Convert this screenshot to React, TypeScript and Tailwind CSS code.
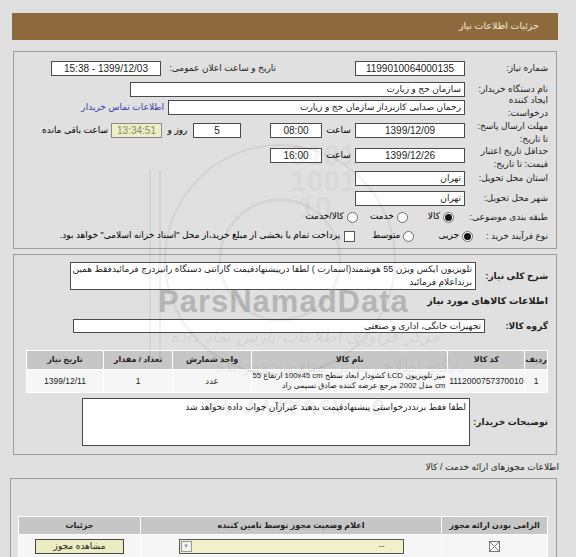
import * as React from "react"

// صفحه جزئیات اطلاعات نیاز

const FONT = "font-['Liberation_Sans','DejaVu_Sans',sans-serif]"

function Box({ w, h = 15, className = "", children }: { w: number; h?: number; className?: string; children?: React.ReactNode }) {
    return (
        <div
            className={"shrink-0 border border-[#4a4a4a] bg-white text-[9px] leading-[13px] text-[#222] px-[3px] overflow-hidden whitespace-nowrap " + className}
            style={{ width: w, height: h }}
        >
            {children}
        </div>
    )
}

function Radio({ on = false }: { on?: boolean }) {
    return (
        <span className="shrink-0 w-[11px] h-[11px] rounded-full border border-[#6b6b6b] bg-white flex items-center justify-center">
            {on && <span className="w-[7px] h-[7px] rounded-full bg-[#111]" />}
        </span>
    )
}

function Label({ w, children, bold = false }: { w: number; children: React.ReactNode; bold?: boolean }) {
    return (
        <div
            className={"shrink-0 whitespace-nowrap leading-[13px] text-[#222] " + (bold ? "font-bold text-[9px]" : "text-[9px]")}
            style={{ width: w }}
        >
            {children}
        </div>
    )
}

function Watermark() {
    return (
        <div className="absolute inset-0 pointer-events-none">
            <svg className="absolute left-[130px] top-[130px]" width="300" height="260" viewBox="0 0 300 260" fill="none">
                <circle cx="150" cy="130" r="115" stroke="#000" strokeOpacity="0.06" strokeWidth="2" />
                <circle cx="150" cy="130" r="60" stroke="#000" strokeOpacity="0.05" strokeWidth="3" />
                <path d="M20 40 L20 230 M30 40 L30 230" stroke="#000" strokeOpacity="0.05" strokeWidth="2" />
            </svg>
            <div className="absolute left-[290px] top-[142px] text-[30px] leading-[26px] font-bold text-black/[0.05] font-['Liberation_Sans',sans-serif]">
                0101<br />1001<br />&nbsp;10
            </div>
            <div className="absolute left-[158px] top-[287px] text-[31px] leading-[30px] font-bold tracking-[1px] text-[#8a8a8a]/50 font-['Liberation_Sans',sans-serif]">
                ParsNamadData
            </div>
            <div dir="rtl" className="absolute left-[170px] top-[326px] text-[17px] leading-[20px] italic text-black/[0.07] font-['DejaVu_Sans',sans-serif]">
                مرکز فراوری اطلاعات پارس نماد داده
            </div>
            <div dir="rtl" className="absolute left-[215px] top-[356px] text-[17px] leading-[20px] text-black/[0.06] font-['DejaVu_Sans',sans-serif]">
                پایگاه اطلاع رسانی مناقصه ومزایده
            </div>
            <div className="absolute left-[190px] top-[395px] text-[24px] leading-[24px] font-bold text-black/[0.07] font-['DejaVu_Sans',sans-serif]">
                ۰۲۱-۸۸۳۴۹۶۷۰-۵
            </div>
        </div>
    )
}

const ITEM_COLS = [22, 77, 198, 79, 69, 77]
const NUM = "text-center !text-[10px]"

export default function App() {
    return (
        <div className={"relative w-[576px] h-[557px] overflow-hidden bg-[#e0e0e0] " + FONT}>
            <div dir="rtl" className="ml-[12px] w-[546px] pt-[13px]">
                {/* Header */}
                <div className="h-[27px] bg-[#8c6a3e] flex items-center pr-[19px] text-[9.5px] text-[#f2e9d6]">
                    جزئیات اطلاعات نیاز
                </div>

                {/* Panel 1 */}
                <div className="mt-[11px] mx-[1px] h-[198px] border border-[#9d9d9d] pr-[8px]">
                    <div className="flex items-center mt-[9px] h-[15px]">
                        <Label w={83}>شماره نیاز:</Label>
                        <Box w={110} className={NUM}>1199010064000135</Box>
                        <div className="shrink-0 w-[115px] mr-[79px] whitespace-nowrap text-[9px] text-[#222]">تاریخ و ساعت اعلان عمومی:</div>
                        <Box w={110} className={NUM}>1399/12/03 - 15:38</Box>
                    </div>

                    <div className="flex items-center mt-[6px] h-[15px]">
                        <Label w={83}>نام دستگاه خریدار:</Label>
                        <Box w={335}>سازمان حج و زیارت</Box>
                    </div>

                    <div className="flex items-start mt-[3px] h-[15px]">
                        <div className="-mt-[6px]"><Label w={83}>ایجاد کننده<br />درخواست:</Label></div>
                        <Box w={297}>رحمان  صدایی کاربرداز سازمان حج و زیارت</Box>
                        <div className="mr-[4px] whitespace-nowrap text-[9px] leading-[15px] text-[#3b3ba6]">اطلاعات تماس خریدار</div>
                    </div>

                    <div className="flex items-start mt-[8px] h-[15px]">
                        <div className="-mt-[3px]"><Label w={83}>مهلت ارسال پاسخ:<br />تا تاریخ:</Label></div>
                        <Box w={110} className={NUM}>1399/12/09</Box>
                        <div className="shrink-0 w-[33px] text-center text-[9px] leading-[15px]">ساعت</div>
                        <Box w={52} className={NUM}>08:00</Box>
                        <div className="shrink-0 w-[29px]" />
                        <Box w={48} className={NUM}>5</Box>
                        <div className="shrink-0 w-[31px] text-center text-[9px] leading-[15px]">روز و</div>
                        <Box w={51} className={NUM + " !bg-[#eeeec8] !text-[#8a8a6a] !border-[#8a8a8a]"}>13:34:51</Box>
                        <div className="mr-[3px] whitespace-nowrap text-[9px] leading-[15px]">ساعت باقی مانده</div>
                    </div>

                    <div className="flex items-start mt-[10px] h-[15px]">
                        <div className="-mt-[3px]"><Label w={83}>حداقل تاریخ اعتبار<br />قیمت: تا تاریخ:</Label></div>
                        <Box w={110} className={NUM}>1399/12/26</Box>
                        <div className="shrink-0 w-[33px] text-center text-[9px] leading-[15px]">ساعت</div>
                        <Box w={52} className={NUM}>16:00</Box>
                    </div>

                    <div className="flex items-center mt-[8px] h-[15px]">
                        <Label w={83}>استان محل تحویل:</Label>
                        <Box w={110}>تهران</Box>
                    </div>

                    <div className="flex items-center mt-[5px] h-[15px]">
                        <Label w={83}>شهر محل تحویل:</Label>
                        <Box w={110}>تهران</Box>
                    </div>

                    <div className="flex items-center mt-[4px] h-[14px] text-[9px] whitespace-nowrap">
                        <Label w={94}>طبقه بندی موضوعی:</Label>
                        <Radio on />
                        <span className="mr-[3px]">کالا</span>
                        <span className="mr-[20px]"><Radio /></span>
                        <span className="mr-[3px]">خدمت</span>
                        <span className="mr-[12px]"><Radio /></span>
                        <span className="mr-[3px]">کالا/خدمت</span>
                    </div>

                    <div className="flex items-center mt-[5px] h-[14px] text-[9px] whitespace-nowrap">
                        <Label w={75}>نوع فرآیند خرید :</Label>
                        <Radio on />
                        <span className="mr-[3px]">جزیی</span>
                        <span className="mr-[24px]"><Radio /></span>
                        <span className="mr-[3px]">متوسط</span>
                        <span className="mr-[17px] w-[11px] h-[11px] border border-[#555] bg-white shrink-0" />
                        <span className="mr-[4px]">پرداخت تمام یا بخشی از مبلغ خرید،از محل "اسناد خزانه اسلامی" خواهد بود.</span>
                    </div>
                </div>

                {/* Panel 2 */}
                <div className="mt-[5px] mx-[1px] h-[201px] border border-[#9d9d9d] pr-[8px]">
                    <div className="flex items-center mt-[7px] h-[28px]">
                        <Label w={72} bold>شرح کلی نیاز:</Label>
                        <Box w={406} h={28} className="text-[8.8px]">
                            تلویزیون ایکس ویژن 55 هوشمند(اسمارت )  لطفا درپیشنهادقیمت گارانتی دستگاه رانیزدرج فرمائیدفقط همین
                            <br />
                            برنداعلام فرمائید
                        </Box>
                    </div>

                    <div className="mt-[4px] h-[14px] text-[9.5px] leading-[14px] font-bold text-[#222]">
                        اطلاعات کالاهای مورد نیاز
                    </div>

                    <div className="flex items-center mt-[11px] h-[14px]">
                        <Label w={63} bold>گروه کالا:</Label>
                        <Box w={412} h={14} className="leading-[12px]">تجهیزات خانگی، اداری و صنعتی</Box>
                    </div>

                    {/* جدول کالاها */}
                    <div className="mt-[17px] ml-[12px] w-[522px] bg-white p-px flex flex-col gap-px text-[8px] text-[#222]">
                        <div className="flex gap-px h-[18px] font-bold">
                            {["ردیف", "کد کالا", "نام کالا", "واحد شمارش", "تعداد / مقدار", "تاریخ نیاز"].map((t, i) => (
                                <div key={t} className="bg-[#c6c6c6] flex items-center justify-center whitespace-nowrap" style={{ width: ITEM_COLS[i] }}>{t}</div>
                            ))}
                        </div>
                        <div className="flex gap-px h-[22px]">
                            <div className="bg-[#f6f6f6] flex items-center justify-center text-[8.5px]" style={{ width: ITEM_COLS[0] }}>1</div>
                            <div className="bg-[#f6f6f6] flex items-center justify-center text-[8.5px]" style={{ width: ITEM_COLS[1] }}>1112000757370010</div>
                            <div className="bg-[#f6f6f6] flex flex-col justify-center px-[2px] leading-[10px] text-[7.8px] whitespace-nowrap overflow-hidden" style={{ width: ITEM_COLS[2] }}>
                                <div>میز تلویزیون LCD کشودار ابعاد سطح 100x45 cm ارتفاع 55</div>
                                <div>cm مدل 2002 مرجع عرضه کننده صادق نسیمی راد</div>
                            </div>
                            <div className="bg-[#f6f6f6] flex items-center justify-center text-[8.5px]" style={{ width: ITEM_COLS[3] }}>عدد</div>
                            <div className="bg-[#f6f6f6] flex items-center justify-center text-[8.5px]" style={{ width: ITEM_COLS[4] }}>1</div>
                            <div className="bg-[#f6f6f6] flex items-center justify-center text-[8.5px]" style={{ width: ITEM_COLS[5] }}>1399/12/11</div>
                        </div>
                    </div>

                    <div className="flex items-center mt-[5px] h-[48px]">
                        <Label w={78} bold>توضیحات خریدار:</Label>
                        <Box w={388} h={48} className="pt-[2px]">لطفا فقط برنددرخواستی پیشنهادقیمت بدهید عیرازآن جواب داده نخواهد شد</Box>
                    </div>
                </div>

                {/* مجوزها */}
                <div className="mt-[5px] h-[14px] -mr-px text-[9px] leading-[14px] text-[#222]">
                    اطلاعات مجوزهای ارائه خدمت / کالا
                </div>
                <div className="mt-[4px] -ml-[2px] mr-[1px] h-[100px] border border-[#9d9d9d] pt-[37px] px-[8px]">
                    <div className="w-[530px] bg-white p-px flex flex-col gap-px text-[8px] text-[#222]">
                        <div className="flex gap-px h-[17px] font-bold whitespace-nowrap">
                            <div className="w-[105px] bg-[#c6c6c6] flex items-center justify-center">الزامی بودن ارائه مجوز</div>
                            <div className="w-[300px] bg-[#c6c6c6] flex items-center justify-center">اعلام وضعیت مجوز توسط تامین کننده</div>
                            <div className="flex-1 bg-[#c6c6c6] flex items-center justify-center">جزئیات</div>
                        </div>
                        <div className="flex gap-px h-[23px]">
                            <div className="w-[105px] bg-[#f6f6f6] flex items-center justify-center">
                                <svg width="11" height="11" viewBox="0 0 11 11">
                                    <rect x="0.5" y="0.5" width="10" height="10" fill="#fff" stroke="#777" />
                                    <path d="M1 1 L10 10 M10 1 L1 10" stroke="#777" strokeWidth="1" />
                                </svg>
                            </div>
                            <div className="w-[300px] bg-[#f6f6f6] flex items-center justify-center">
                                <div className="w-[225px] h-[15px] border border-[#555] bg-[#f1f0cb] flex items-center">
                                    <span className="flex-1 pr-[18px] text-[9px] text-[#555]">--</span>
                                    <span className="w-[11px] h-[11px] ml-[1px] border border-[#999] bg-[#f4f4f4] flex items-center justify-center text-[7px] text-[#999]">▾</span>
                                </div>
                            </div>
                            <div className="flex-1 bg-[#f6f6f6] flex items-center justify-center">
                                <div className="w-[89px] h-[15px] border border-[#444] bg-[#ececc2] flex items-center justify-center text-[9px]">مشاهده مجوز</div>
                            </div>
                        </div>
                    </div>
                </div>
            </div>
            <Watermark />
        </div>
    )
}
